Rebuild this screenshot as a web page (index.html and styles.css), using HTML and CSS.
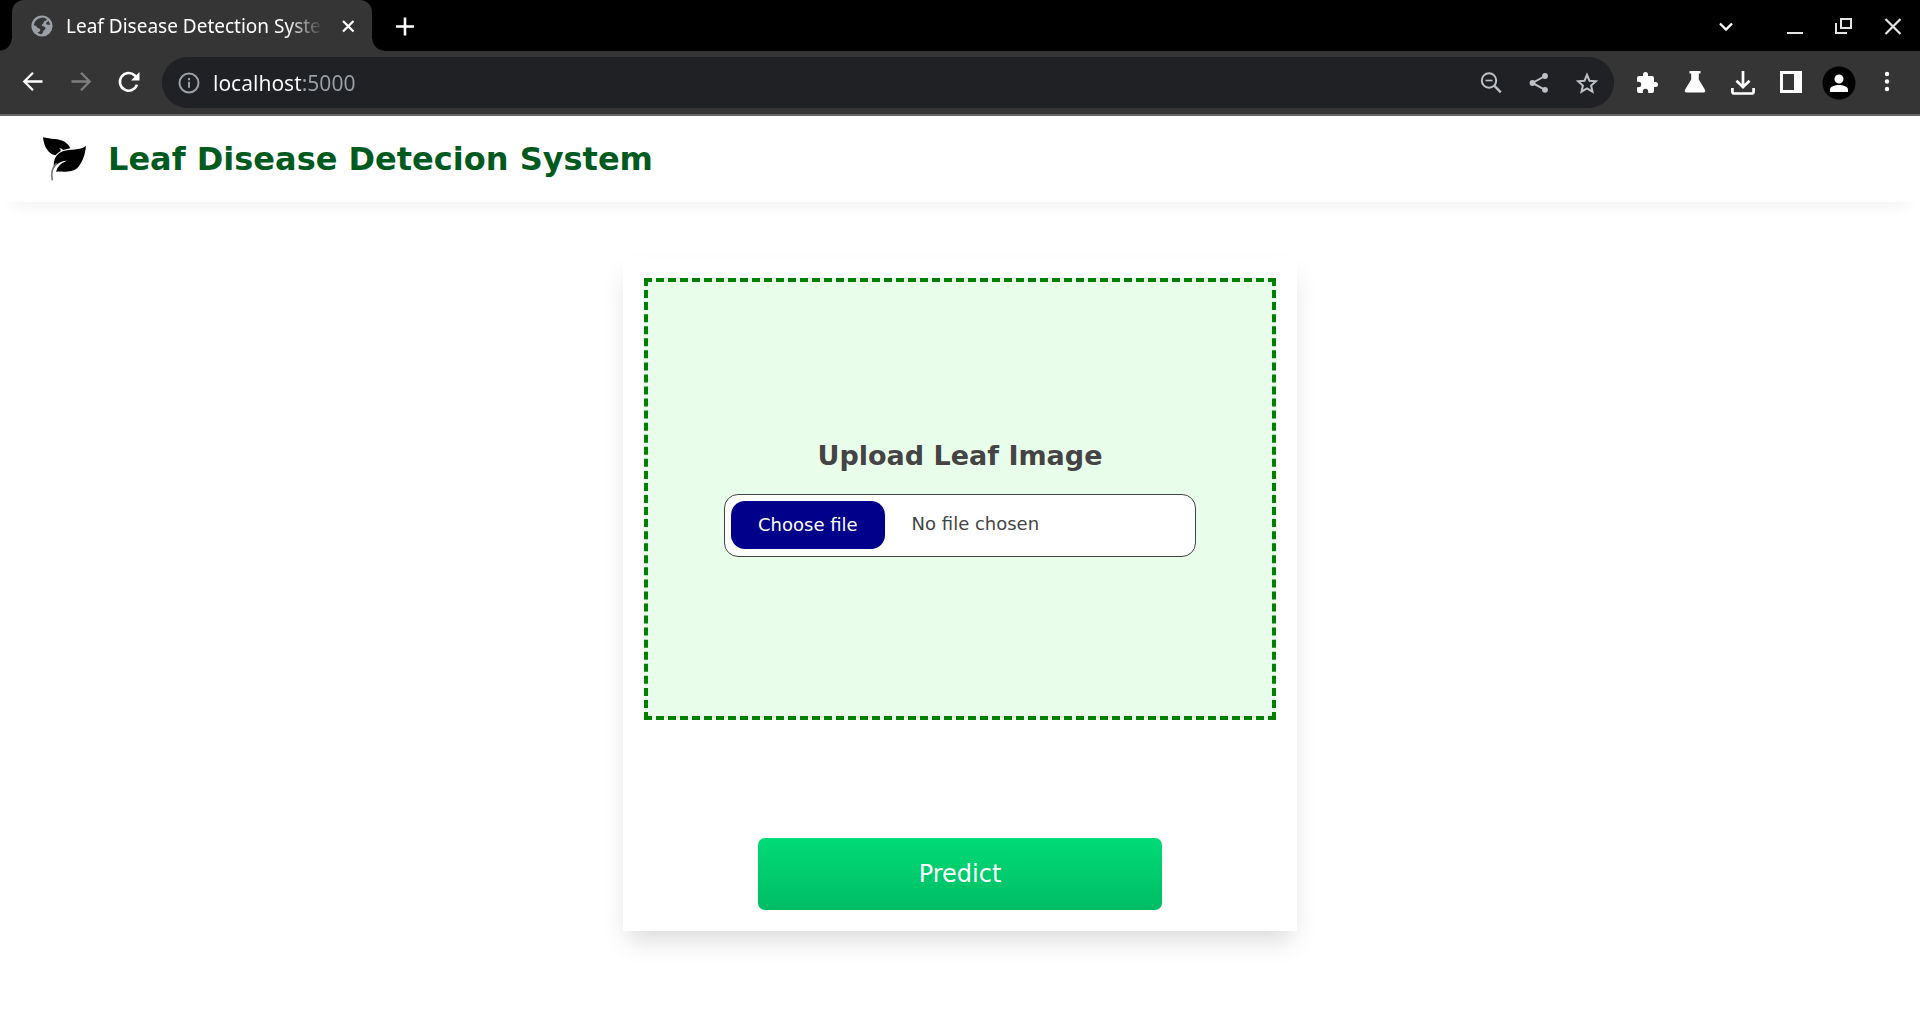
FILE: index.html
```html
<!DOCTYPE html>
<html lang="en">
<head>
<meta charset="utf-8">
<meta name="viewport" content="width=device-width, initial-scale=1">
<title>Leaf Disease Detection System</title>
<link rel="stylesheet" href="styles.css">
</head>
<body>
<div class="browser">
  <div class="tabstrip">
    <div class="tab">
      <svg class="icon-22" viewBox="0 0 22 22"><circle cx="11" cy="11" r="10.600" fill="#9aa0a6"/><path d="M10.500 2.800c2.500-.4 4.500.4 5.300 1.500-.3 1.500-1.800 1.500-2.800 2.200-.9.800 0 2-1.300 2.600-1 .5-1.200 1.300-.4 1.900 1.300.6 3.200.4 3.200 2.200-.2 1.700-2 1.700-2.300 3.300-.2 1.200-1 2.600-2.400 2.700-1.300-.3-2.500-1-3.500-1.800 2-.4 3.300-1.200 3-2.700-.4-1.700-3-1.100-3.600-2.600-.3-1.200-1.500-1.500-2.900-1.500C3.200 6.700 6 3.600 10.500 2.800z" fill="#353535"/><path d="M19.100 9.500c-1.600.6-3.500.3-3.900-.8-.3-1.100 1-1.600 2.200-2.700.8 1 1.400 2.200 1.700 3.500z" fill="#353535"/></svg>
      <span class="tab-title">Leaf Disease Detection System</span>
      <button class="icon-btn" aria-label="Close tab"><svg class="icon-22" viewBox="0 0 22 22" stroke="#fff" stroke-width="2.200"><path d="M6 6l10.500 10.500M16.500 6L6 16.500"/></svg></button>
    </div>
    <button class="icon-btn" aria-label="New tab"><svg class="icon-24" viewBox="0 0 24 24" stroke="#fff" stroke-width="2.600"><path d="M12 3.500v18M3 12.500h18"/></svg></button>
    <div class="window-controls">
      <button class="icon-btn tab-search" aria-label="Search tabs"><svg class="icon-24" viewBox="0 0 24 24" fill="none" stroke="#fff" stroke-width="2.300"><path d="M6 9.500l6 6 6-6"/></svg></button>
      <button class="icon-btn" aria-label="Minimize"><svg class="icon-24" viewBox="0 0 24 24" stroke="#e4e4e4" stroke-width="2"><path d="M4 19h16"/></svg></button>
      <button class="icon-btn" aria-label="Restore"><svg class="icon-24" viewBox="0 0 24 24" fill="none" stroke="#e4e4e4" stroke-width="2"><path d="M9 5h10v9H9zM4 9v10h11"/></svg></button>
      <button class="icon-btn" aria-label="Close window"><svg class="icon-24" viewBox="0 0 24 24" stroke="#e4e4e4" stroke-width="2.200"><path d="M4.500 5l15 15M19.500 5l-15 15"/></svg></button>
    </div>
  </div>
  <div class="toolbar">
    <div class="nav-buttons">
      <button class="icon-btn" aria-label="Back"><svg class="icon-24" viewBox="0 0 24 24" fill="none" stroke="#fff" stroke-width="2.300"><path d="M21.500 11.500H3.500M12 2.800L3.300 11.500 12 20.200"/></svg></button>
      <button class="icon-btn" aria-label="Forward" disabled><svg class="icon-24" viewBox="0 0 24 24" fill="none" stroke="#7f7f7f" stroke-width="2.300"><path d="M2.500 11.500h18M12 2.800l8.700 8.700L12 20.200"/></svg></button>
      <button class="icon-btn" aria-label="Reload"><svg class="icon-24" viewBox="0 0 24 24"><path d="M20 14.700A8.800 8.800 0 1 1 17.800 5.500L20 7.800" fill="none" stroke="#fff" stroke-width="2.500"/><path d="M22.500 2v8.500H14z" fill="#fff"/></svg></button>
    </div>
    <div class="omnibox">
      <svg class="icon-22" viewBox="0 0 22 22" fill="none" stroke="#9aa0a6" stroke-width="2"><circle cx="11" cy="11" r="9.500"/><path d="M11 9.800v6M11 6v2.200"/></svg>
      <input class="url" type="text" value="localhost:5000" aria-label="Address">
      <div class="omnibox-actions">
        <button class="icon-btn" aria-label="Zoom out"><svg class="icon-24" viewBox="0 0 24 24" fill="none" stroke="#bdc1c6" stroke-width="2"><circle cx="10" cy="9.500" r="7.200"/><path d="M15.200 14.700l6.600 6.600" stroke-width="2.400"/><path d="M6.500 9.500h7" stroke-width="1.600"/></svg></button>
        <button class="icon-btn" aria-label="Share"><svg class="icon-24" viewBox="0 0 24 24" fill="#bdc1c6"><path d="M18 5L5.500 12l12.500 6.800" fill="none" stroke="#bdc1c6" stroke-width="2"/><circle cx="18" cy="5" r="2.900"/><circle cx="5.500" cy="12" r="2.900"/><circle cx="18" cy="18.800" r="2.900"/></svg></button>
        <button class="icon-btn" aria-label="Bookmark"><svg class="icon-24" viewBox="0 0 24 24" fill="none" stroke="#bdc1c6" stroke-width="2"><path d="M12 3.800l2.500 5.900 6.400.6-4.800 4.200 1.400 6.200-5.500-3.300-5.500 3.300 1.400-6.200-4.800-4.200 6.400-.6z"/></svg></button>
      </div>
    </div>
    <div class="extensions">
      <button class="icon-btn" aria-label="Extensions"><svg class="icon-24" viewBox="0 0 24 24" fill="#fff"><path d="M20.500 11H19V7a2 2 0 0 0-2-2h-4V3.500a2.500 2.500 0 0 0-5 0V5H4a2 2 0 0 0-2 2v3.800h1.500a2.700 2.700 0 0 1 0 5.400H2V20a2 2 0 0 0 2 2h3.800v-1.500a2.700 2.700 0 0 1 5.400 0V22H17a2 2 0 0 0 2-2v-4h1.500a2.500 2.500 0 0 0 0-5z"/></svg></button>
      <button class="icon-btn" aria-label="Experiments"><svg class="icon-24" viewBox="0 0 24 24" fill="#fff"><path d="M6.500 0h11v2.500h-1.700v6L22 18.800q1 2.700-1.500 2.700h-17Q1 21.500 2 18.800L8.200 8.500v-6H6.500z"/></svg></button>
      <button class="icon-btn" aria-label="Downloads"><svg class="icon-24" viewBox="0 -1 24 24" fill="none" stroke="#fff" stroke-width="2.700"><path d="M12-1v16M5.500 8.800l6.500 6.400 6.500-6.400M1.400 16v3.500q0 2 2 2h17.200q2 0 2-2V16"/></svg></button>
      <button class="icon-btn" aria-label="Side panel"><svg class="icon-24" viewBox="0 1 24 24"><path d="M1 1h22v22H1z" fill="#fff"/><path d="M4 4h11v16H4z" fill="#353535"/></svg></button>
      <button class="icon-btn" aria-label="Profile"><svg class="icon-34" viewBox="0 0 34 34"><circle cx="17" cy="17" r="16.500"/><path d="M17 8.500a4.500 4.500 0 1 1 0 9 4.500 4.500 0 0 1 0-9zM8 26v-2.500c0-3 5-4.500 9-4.500s9 1.500 9 4.500V26z" fill="#fff"/></svg></button>
      <button class="icon-btn" aria-label="Menu"><svg class="icon-24" viewBox="0 1 24 24" fill="#fff"><circle cx="12" cy="4" r="2.200"/><circle cx="12" cy="11.500" r="2.200"/><circle cx="12" cy="19" r="2.200"/></svg></button>
    </div>
  </div>
</div>
<header class="site-header">
  <svg class="logo" viewBox="126 110 138 138"><path d="M129 114C150 120 178 117 195 128Q206 135 211 147Q200 149 190 152Q186 147 177 146Q184 150 182 155Q173 161 166 168C145 163 132 144 129 114z"/><path d="M258 140C255 168 247 190 232 206C216 221 190 216 168 217Q172 195 201 184Q181 184 168 198L162 206C159 183 167 165 188 156C213 148 238 154 258 140z"/><path d="M157 243C153 223 157 203 170 192" fill="none" stroke="#777" stroke-width="5"/></svg>
  <h1 class="site-title">Leaf Disease Detecion System</h1>
</header>
<main class="content">
  <form class="card">
    <div class="dropzone">
      <h2 class="upload-title">Upload Leaf Image</h2>
      <div class="file-field">
        <input class="file-input" type="file" id="leaf-image" accept="image/*">
        <label class="file-button" for="leaf-image">Choose file</label>
        <span class="file-name">No file chosen</span>
      </div>
    </div>
    <button class="predict" type="button">Predict</button>
  </form>
</main>
</body>
</html>
```
FILE: styles.css
```css
* {
  box-sizing: border-box;
}

body {
  margin: 0;
  background: #fff;
  font-family: "DejaVu Sans", sans-serif;
}

button,
input {
  font: inherit;
}

svg {
  display: block;
  flex: none;
}

.icon-22 { width: 22px; height: 22px; }
.icon-24 { width: 24px; height: 24px; }
.icon-34 { width: 34px; height: 34px; }

.icon-btn {
  display: flex;
  align-items: center;
  justify-content: center;
  flex: none;
  width: 24px;
  height: 34px;
  padding: 0;
  border: 0;
  background: none;
}

/* Browser chrome */
.browser {
  font-family: "Noto Sans", sans-serif;
  background: #353535;
  border-bottom: 2px solid #656565;
}

.tabstrip {
  display: flex;
  align-items: center;
  height: 51px;
  background: #000;
}

.tab {
  position: relative;
  display: flex;
  align-items: center;
  gap: 13px;
  width: 360px;
  height: 51px;
  margin: 0 21px 0 12px;
  padding: 0 12px 0 19px;
  border-radius: 12px 12px 0 0;
  background: #353535;
}

/* Flared feet that join the tab to the toolbar */
.tab::before,
.tab::after {
  content: "";
  position: absolute;
  bottom: 0;
  width: 12px;
  height: 12px;
}

.tab::before {
  right: 100%;
  background: radial-gradient(circle at 0 0, #000 11px, #353535 12px);
}

.tab::after {
  left: 100%;
  background: radial-gradient(circle at 100% 0, #000 11px, #353535 12px);
}

.tab-title {
  flex: 1;
  overflow: hidden;
  color: #fff;
  font-size: 19px;
  white-space: nowrap;
  mask-image: linear-gradient(to right, #000 calc(100% - 36px), transparent);
}

.window-controls {
  display: flex;
  gap: 25px;
  margin-left: auto;
  padding-right: 15px;
}

.tab-search {
  margin-right: 20px;
}

.toolbar {
  display: flex;
  align-items: center;
  gap: 21px;
  height: 63px;
  padding: 0 21px;
}

.nav-buttons,
.extensions,
.omnibox-actions {
  display: flex;
  align-items: center;
  gap: 24px;
}

.nav-buttons {
  padding-bottom: 2px;
}

.omnibox {
  display: flex;
  align-items: center;
  flex: 1;
  gap: 13px;
  height: 51px;
  padding: 0 15px 0 16px;
  border-radius: 26px;
  background: #202124;
}

/* The port is dimmed after the host name */
.url {
  flex: 1;
  min-width: 0;
  height: 34px;
  padding: 0;
  border: 0;
  outline: 0;
  font-size: 21px;
  color: #fff;
  background: linear-gradient(to right, #fff 88px, #9aa0a6 88px);
  background-clip: text;
  -webkit-background-clip: text;
  -webkit-text-fill-color: transparent;
}

/* Page */
.site-header {
  display: flex;
  align-items: center;
  gap: 20px;
  padding: 20px 42px;
  background: #fff;
  box-shadow: 0 16px 16px -14px rgba(0, 0, 0, 0.07);
}

.logo {
  width: 46px;
  height: 46px;
}

.site-title {
  margin: 0;
  color: #005a20;
  font-size: 32px;
  line-height: 40px;
}

.content {
  display: flex;
  justify-content: center;
  padding: 55px 21px;
}

.card {
  display: flex;
  flex-direction: column;
  align-items: center;
  width: 100%;
  max-width: 674px;
  padding: 21px;
  background: #fff;
  box-shadow: 0 14px 24px -5px rgba(0, 0, 0, 0.15);
}

.dropzone {
  display: flex;
  flex-direction: column;
  align-items: center;
  gap: 19px;
  width: 100%;
  padding: 155px 76px 159px;
  border: 4px dashed #008000;
  background: #e9feea;
}

.upload-title {
  margin: 0;
  color: #444;
  font-size: 27px;
  line-height: 38px;
}

.file-field {
  display: flex;
  align-items: flex-start;
  gap: 27px;
  width: 100%;
  padding: 6px 6px 7px;
  border: 1px solid #444;
  border-radius: 14px;
  background: #fff;
  color: #444;
  font-size: 18px;
}

.file-input {
  position: absolute;
  width: 1px;
  height: 1px;
  opacity: 0;
}

.file-button {
  padding: 0 27px;
  border-radius: 14px;
  background: #00008b;
  color: #fff;
  line-height: 48px;
  cursor: pointer;
}

.file-name {
  line-height: 46px;
}

.predict {
  width: 64%;
  height: 72px;
  margin-top: 118px;
  border: 0;
  border-radius: 7px;
  background: linear-gradient(#00da76, #00bd65);
  color: #fff;
  font-size: 24px;
}
```
